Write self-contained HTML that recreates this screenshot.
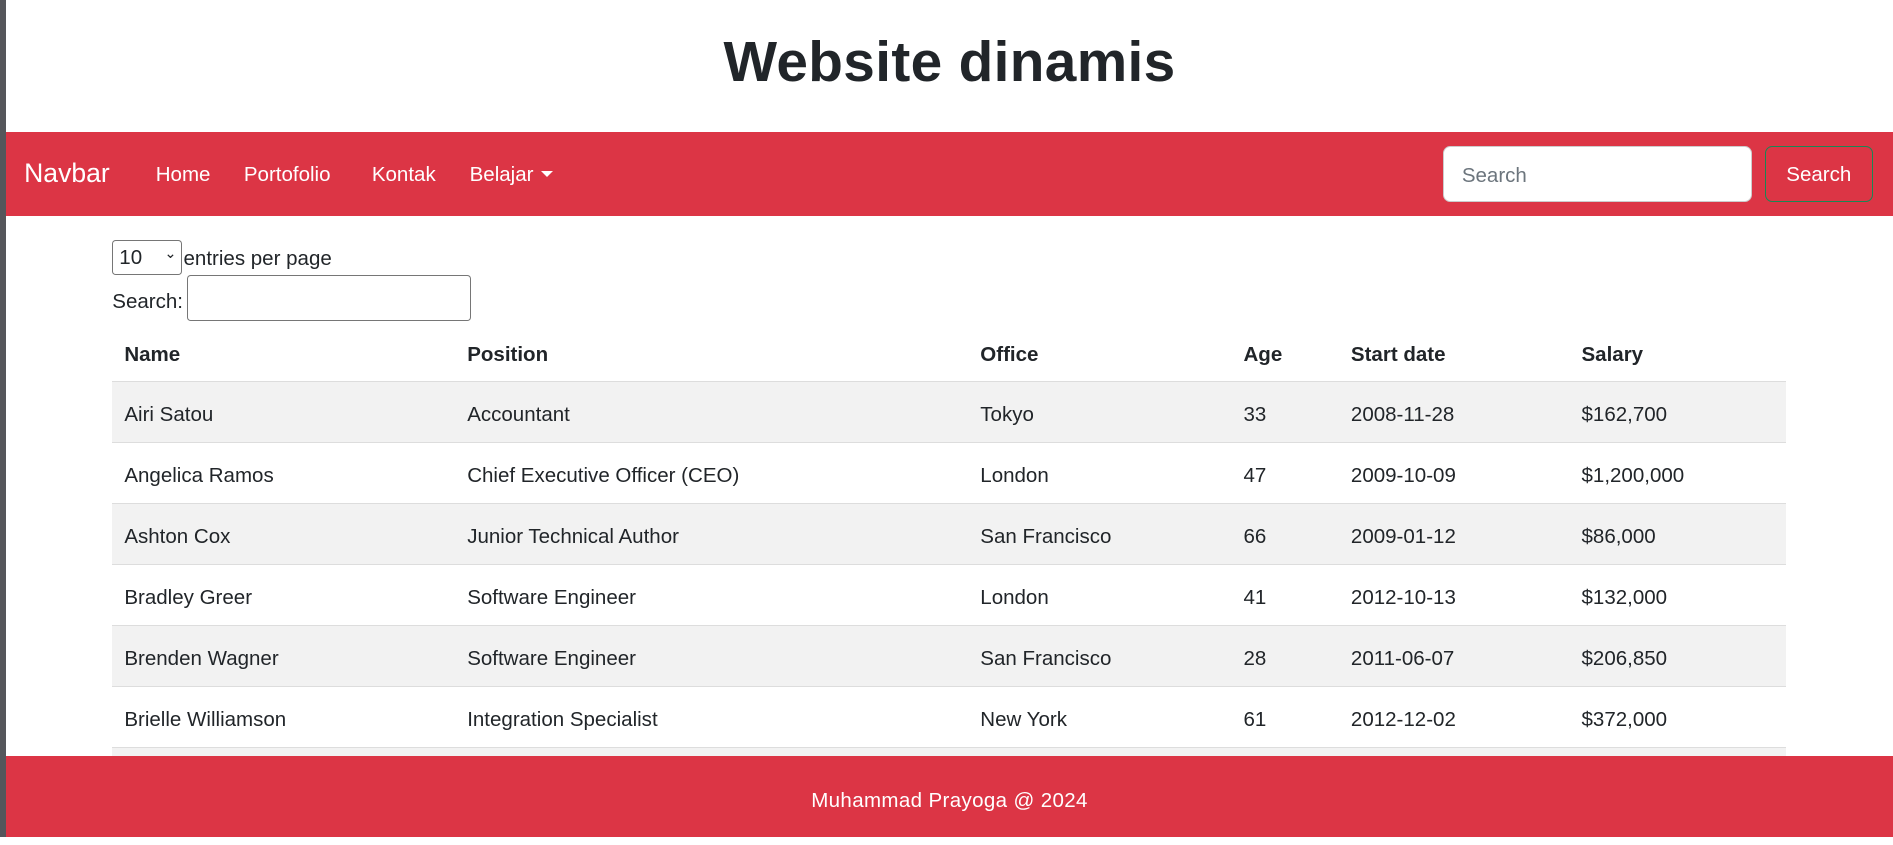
<!DOCTYPE html>
<html><head><meta charset="utf-8">
<style>
html{zoom:1.2073}
body{margin:0;width:1568px;height:693px;overflow:hidden;position:relative;background:#fff;font-family:"Liberation Sans",sans-serif;color:#212529;font-size:16px}
.strip{position:absolute;left:0;top:0;width:5px;height:693px;background:#55565b}
h1{position:absolute;left:5px;right:0;top:25px;margin:0;text-align:center;font-size:47px;font-weight:bold;color:#212529;letter-spacing:0.3px}
.nav{position:absolute;left:5px;right:0;top:109px;height:70px;background:#dc3545;color:#fff}
.nav span{position:absolute;top:26px;font-size:17px}
.brand{left:15px;top:22px!important;font-size:22px!important}
.caret{display:inline-block;border-left:5px solid transparent;border-right:5px solid transparent;border-top:5px solid #fff;vertical-align:3px;margin-left:6px}
.sin{position:absolute;left:1190px;top:12px;width:256px;height:46px;background:#fff;border:1px solid #ccc;border-radius:6px;box-sizing:border-box;color:#6c757d;font-size:17px;padding:14px 15px}
.sbtn{position:absolute;left:1457px;top:12px;width:89px;height:46px;border:1px solid #198754;border-radius:6px;box-sizing:border-box;color:#fff;font-size:17px;text-align:center;line-height:47px}
.sel{position:absolute;left:93px;top:199px;width:58px;height:29px;border:1px solid #767676;border-radius:3px;box-sizing:border-box;font-size:17px;padding:4px 5px}
.sel i{position:absolute;right:4px;top:4px;font-style:normal;font-size:12px}
.t1{position:absolute;left:152px;top:205px;font-size:17px}
.t2{position:absolute;left:93px;top:240px;font-size:17px}
.in2{position:absolute;left:155px;top:228px;width:235px;height:38px;border:1px solid #767676;border-radius:3px;box-sizing:border-box}
table{position:absolute;left:93px;top:270px;width:1386px;border-collapse:collapse;font-size:17px}
th{text-align:left;font-weight:bold;height:44px;padding:2px 10px 0;border-bottom:1px solid #ddd}
td{height:45.7px;padding:4px 10px 0;border-bottom:1px solid #ddd}
tbody tr:nth-child(odd) td{background:#f2f2f2}
.foot{position:absolute;left:5px;right:0;top:626px;height:67px;background:#dc3545;color:#fff;text-align:center;line-height:74px;font-size:17px;letter-spacing:0.3px}
</style></head><body>
<div class="strip"></div>
<h1>Website dinamis</h1>
<div class="nav">
<span class="brand">Navbar</span>
<span style="left:124px">Home</span>
<span style="left:197px">Portofolio</span>
<span style="left:303px">Kontak</span>
<span style="left:384px">Belajar<i class="caret"></i></span>
<div class="sin">Search</div>
<div class="sbtn">Search</div>
</div>
<div class="sel">10<i>&#8964;</i></div>
<div class="t1">entries per page</div>
<div class="t2">Search:</div>
<div class="in2"></div>
<table>
<colgroup><col style="width:284px"><col style="width:425px"><col style="width:218px"><col style="width:89px"><col style="width:191px"><col></colgroup>
<thead><tr><th>Name</th><th>Position</th><th>Office</th><th>Age</th><th>Start date</th><th>Salary</th></tr></thead>
<tbody>
<tr><td>Airi Satou</td><td>Accountant</td><td>Tokyo</td><td>33</td><td>2008-11-28</td><td>$162,700</td></tr>
<tr><td>Angelica Ramos</td><td>Chief Executive Officer (CEO)</td><td>London</td><td>47</td><td>2009-10-09</td><td>$1,200,000</td></tr>
<tr><td>Ashton Cox</td><td>Junior Technical Author</td><td>San Francisco</td><td>66</td><td>2009-01-12</td><td>$86,000</td></tr>
<tr><td>Bradley Greer</td><td>Software Engineer</td><td>London</td><td>41</td><td>2012-10-13</td><td>$132,000</td></tr>
<tr><td>Brenden Wagner</td><td>Software Engineer</td><td>San Francisco</td><td>28</td><td>2011-06-07</td><td>$206,850</td></tr>
<tr><td>Brielle Williamson</td><td>Integration Specialist</td><td>New York</td><td>61</td><td>2012-12-02</td><td>$372,000</td></tr>
<tr><td>Bruno Nash</td><td>Software Engineer</td><td>London</td><td>38</td><td>2011-05-03</td><td>$163,500</td></tr>
</tbody></table>
<div class="foot">Muhammad Prayoga @ 2024</div>
</body></html>
